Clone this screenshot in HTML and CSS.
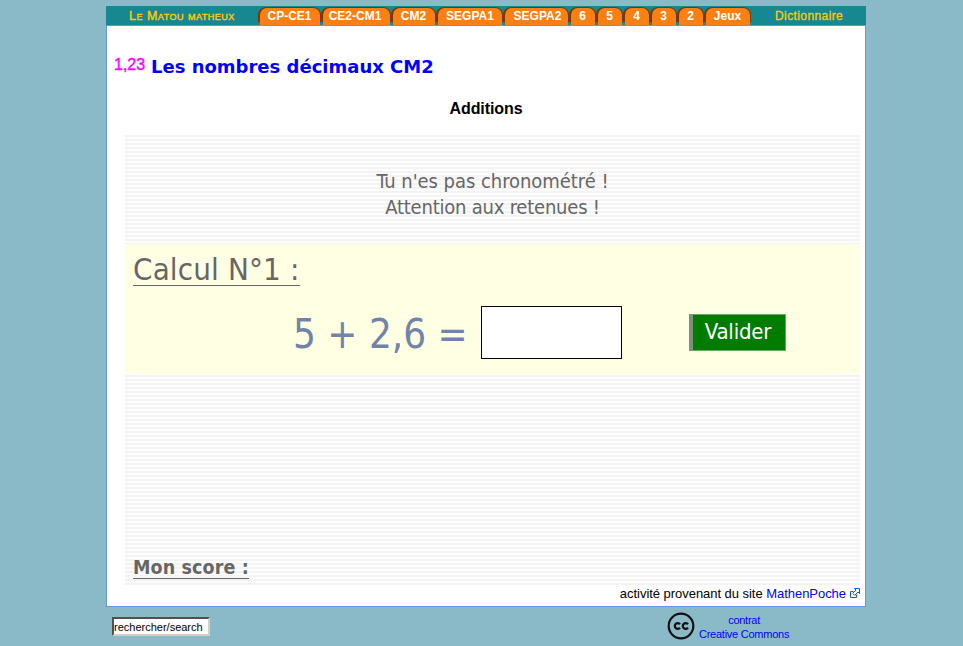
FILE: index.html
```html
<!DOCTYPE html>
<html lang="fr">
<head>
<meta charset="utf-8">
<title>Le Matou matheux</title>
<link rel="stylesheet" href="styles.css">
</head>
<body>
<div class="page">
  <nav class="nav">
    <a class="brand">Le Matou matheux</a>
    <a class="tab t1"><span>CP-CE1</span></a>
    <a class="tab t2"><span>CE2-CM1</span></a>
    <a class="tab t3"><span>CM2</span></a>
    <a class="tab t4"><span>SEGPA1</span></a>
    <a class="tab t5"><span>SEGPA2</span></a>
    <a class="tab"><span>6</span></a>
    <a class="tab"><span>5</span></a>
    <a class="tab"><span>4</span></a>
    <a class="tab"><span>3</span></a>
    <a class="tab"><span>2</span></a>
    <a class="tab t6"><span>Jeux</span></a>
    <a class="dico">Dictionnaire</a>
  </nav>
  <main class="main">
    <h1 class="title"><span class="num">1,23</span><span class="name">Les nombres décimaux CM2</span></h1>
    <h2 class="sub">Additions</h2>
    <section class="game">
      <div class="intro"><p class="line1">Tu n'es pas chronométré !</p><p class="line2">Attention aux retenues !</p></div>
      <div class="question">
        <div class="calc"><span>Calcul N°1 :</span></div>
        <div class="row">
          <span class="expr">5 + 2,6 =</span>
          <input class="answer" type="text">
          <button class="ok" type="button"><span>Valider</span></button>
        </div>
      </div>
      <div class="score"><span>Mon score :</span></div>
    </section>
    <p class="credit"><span>activité provenant du site <a>MathenPoche</a></span>
      <svg class="ext" width="10" height="10" viewBox="0 0 10 10" fill="none" stroke="#0066cc"><path d="M3.500 3.500h-3v6h6v-3"/><path d="M4.500.5h5v5L8 4 4.700 7.300 2.700 5.300 6 2z" fill="#fff"/></svg>
    </p>
  </main>
  <footer class="foot">
    <input class="search" type="text" value="rechercher/search">
    <svg class="cc" width="28" height="28" viewBox="0 0 28 28" fill="none" stroke="#111"><circle cx="14" cy="14" r="12.300" stroke-width="2.200"/><path d="M13 12.200a2.900 2.900 0 1 0 0 3.600M21 12.200a2.900 2.900 0 1 0 0 3.600" stroke-width="2.200"/></svg>
    <a class="contract">contrat<br>Creative Commons</a>
  </footer>
</div>
</body>
</html>
```
FILE: styles.css
```css
* { box-sizing: border-box; }
body { margin: 0; background: #8abac8; font-family: "Liberation Sans", sans-serif; height: 646px; overflow: hidden; }
h1, h2, p { margin: 0; font-weight: normal; }
.page { width: 760px; margin-left: 106px; padding-top: 6px; }
.nav { display: flex; height: 19px; background: #178790; font-size: 12px; line-height: 20px; color: #fc0; }
.brand { width: 152px; padding-left: 23px; font-variant: small-caps; font-size: 12.500px; letter-spacing: .5px; -webkit-text-stroke: .4px #fc0; white-space: nowrap; }
.dico { margin-left: 24px; letter-spacing: .4px; -webkit-text-stroke: .3px #fc0; }
.tab { width: 27px; height: 18px; margin-top: 1px; background: linear-gradient(#7a3900 15px, transparent 15px); border-radius: 8px 8px 0 0; padding: 1px 0 0 2px; color: #fff; font-weight: bold; text-align: center; line-height: 16px; }
.tab span { display: block; height: 17px; margin-right: 1px; padding-right: 1px; background: #fa8014; border-radius: 7px 7px 0 0; }
.t1 { width: 63px; } .t2 { width: 70px; } .t3 { width: 45px; } .t4 { width: 67px; } .t5 { width: 66px; } .t6 { width: 47px; }
.t2 span { padding-right: 3px; }
.t4 span, .t5 span { padding: 0; }
.t5 span { padding-left: 2px; }
.main { height: 582px; background: #fff; border: 1px solid #6495ed; }
.title { display: flex; height: 73px; padding: 28px 0 0 7px; }
.num { width: 37px; color: #f0f; font-size: 16px; line-height: 22px; -webkit-text-stroke: .4px #f0f; }
.name { font: bold 18px/25px "DejaVu Sans", sans-serif; color: #00f; white-space: nowrap; }
.sub { height: 36px; font-size: 16px; font-weight: bold; line-height: 20px; letter-spacing: -.1px; text-align: center; }
.game { width: 735px; height: 450px; margin-left: 18px; background: repeating-linear-gradient(#f3f3f3 0 2px, #fcfcfc 2px 4px); color: #666; font-family: "DejaVu Sans Condensed", "DejaVu Sans", sans-serif; }
.intro { height: 109px; padding-top: 33px; text-align: center; font-size: 20px; line-height: 26px; }
.line1 { letter-spacing: -.05px; }
.line2 { letter-spacing: -.22px; }
.question { height: 130px; background: #ffffe3; padding: 8px 0 0 8px; }
.calc { height: 54px; }
.calc span { display: inline-block; width: 167px; height: 34px; border-bottom: 1px solid #666; font-size: 31px; line-height: 35px; letter-spacing: .15px; white-space: nowrap; }
.row { display: flex; }
.expr { width: 188px; margin-left: 160px; font-size: 40px; line-height: 56px; height: 53px; color: #7184a8; white-space: nowrap; }
.answer { width: 141px; height: 53px; border: 1px solid #000; background: #fff; }
.ok { width: 97px; height: 37px; margin: 8px 0 0 67px; padding: 0; border: 1px solid #6ba56b; border-left: 4px solid #7c907c; background: #007c00; color: #fff; font: 22px/34px "DejaVu Sans Condensed", "DejaVu Sans", sans-serif; letter-spacing: -.2px; }
.ok span { display: block; height: 35px; padding-right: 2px; }
.score { height: 211px; padding: 183px 0 0 8px; }
.score span { display: inline-block; width: 116px; height: 22px; border-bottom: 1px solid #666; font-weight: bold; font-size: 19.500px; line-height: 21px; letter-spacing: .1px; white-space: nowrap; }
.credit { display: flex; justify-content: flex-end; gap: 4px; padding-right: 5px; font-size: 13px; line-height: 17px; letter-spacing: -.04px; }
.credit a, .contract { color: #00f; }
.ext { margin-top: 3px; }
.foot { display: flex; padding-left: 6px; }
.search { width: 98px; height: 19px; margin-top: 10px; padding: 0; border: 2px solid; border-color: #505050 #d4d0c8 #d4d0c8 #505050; font: 11px "Liberation Sans", sans-serif; background: #fff; color: #000; }
.cc { margin: 5px 0 0 457px; }
.contract { margin: 6px 0 0 4px; font-size: 11px; line-height: 14px; letter-spacing: -.25px; text-align: center; }
```
